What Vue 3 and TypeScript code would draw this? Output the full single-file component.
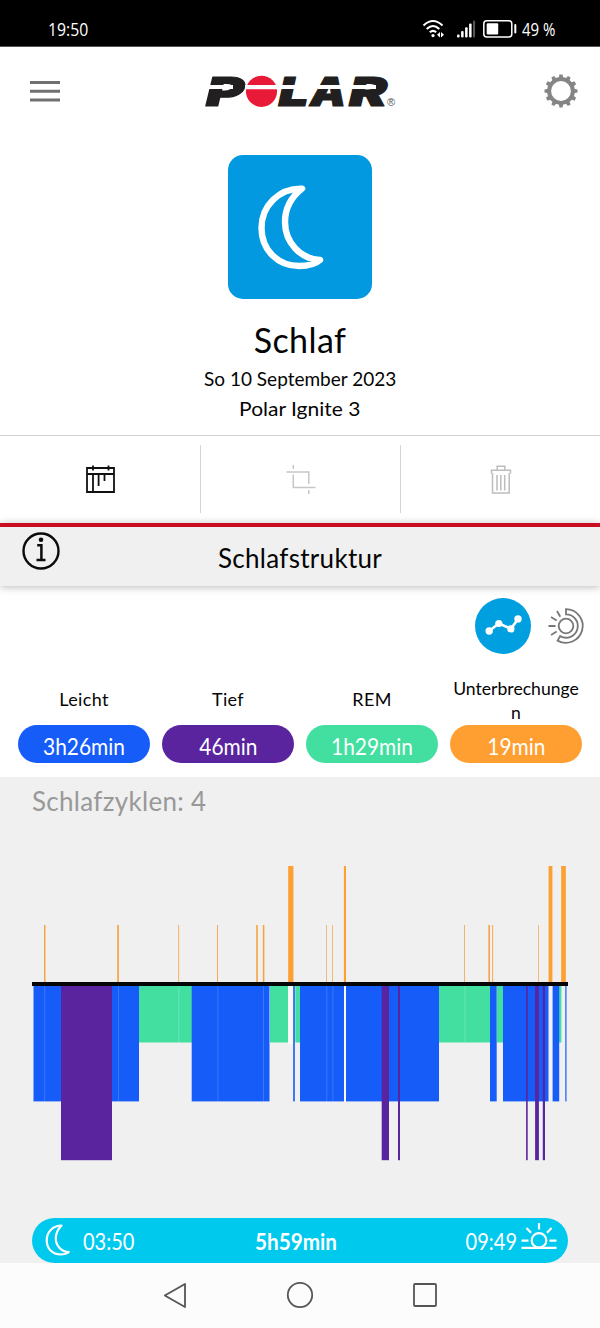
<script setup lang="ts">
interface Phase { label: string; value: string; tone: string }
interface Bar { x: number; w: number; kind: string }

const phases: Phase[] = [
  { label: 'Leicht', value: '3h26min', tone: 'light' },
  { label: 'Tief', value: '46min', tone: 'deep' },
  { label: 'REM', value: '1h29min', tone: 'rem' },
  { label: 'Unterbrechungen', value: '19min', tone: 'wake' },
]

const geometry: Record<string, { y: number; h: number; fill: string }> = {
  rem: { y: 986, h: 56.5, fill: '#43dfa0' },
  light: { y: 986, h: 115.4, fill: '#155cf9' },
  deep: { y: 986, h: 174.2, fill: '#5a249f' },
  long: { y: 866, h: 116, fill: '#fd9f31' },
  short: { y: 925, h: 57, fill: '#f5a344' },
}

const make = (kind: string, spans: [number, number][]): Bar[] =>
  spans.map(([a, b]) => ({ x: a, w: b - a, kind }))

const bars: Bar[] = [
  ...make('rem', [[139, 192], [270, 288], [295.3, 300], [439, 490], [497, 503], [559, 561.4]]),
  ...make('light', [[33.5, 61], [112, 139], [191.7, 269.5], [293.2, 294.8], [300, 344], [346, 439], [490, 496.7], [503, 548.5], [552.6, 559.2], [565.3, 566.5]]),
  ...make('deep', [[61, 112], [381.7, 389], [398, 400], [526.1, 527.7], [535.1, 538.9], [542.8, 545]]),
  ...make('long', [[288.2, 293.4], [343.9, 346], [548.6, 552.4], [561.2, 565.8]]),
  ...make('short', [[44, 45.5], [117.2, 118.9], [178.3, 179.1], [217, 217.9], [256.2, 257.8], [262.8, 264.4], [326, 326.7], [332, 332.7], [464, 464.8], [488.4, 490], [492.2, 493.1], [538.1, 538.8]]),
]
const seams: number[] = [44.2, 118, 217.4, 263, 326.3, 332.4]
const remSeams: number[] = [178.3, 464.4]
const teeth: number[] = Array.from({ length: 12 }, (_, i) => i * 30)
</script>

<template>
  <main class="screen">
    <div class="status">
      <span class="clock">19:50</span>
      <div class="signals">
        <svg class="wifi" width="24" height="20" viewBox="0 0 24 20" fill="none" stroke="#fff" stroke-width="2.1">
          <path d="M1.500 6.500Q11 -2.500 20.500 6.500M4.700 10Q11 4 17.300 10M7.800 13.200Q11 10.400 14.200 13.200" />
          <circle cx="11" cy="16.600" r="1.600" fill="#fff" stroke="none" />
          <path d="M18 13l-3 2.700 3 2.700zM19 13l3 2.700-3 2.700z" fill="#fff" stroke="none" />
        </svg>
        <svg class="cell" width="19" height="18" viewBox="0 0 19 18" fill="#fff">
          <rect x="0" y="14.500" width="2.600" height="3" rx="1" /><rect x="4.100" y="11" width="2.500" height="6.500" rx="1" />
          <rect x="8.100" y="7.200" width="2.500" height="10.300" rx="1" /><rect x="12.100" y="3.500" width="2.500" height="14" rx="1" />
          <rect x="16" y="0.500" width="2.100" height="17" rx="1" fill="#555" />
        </svg>
        <svg class="battery" width="34" height="18" viewBox="0 0 34 18">
          <rect x="0.800" y="0.800" width="28" height="16.200" rx="3" fill="none" stroke="#fff" stroke-width="1.500" />
          <rect x="3.700" y="3.300" width="11.500" height="11.200" rx="1" fill="#fff" /><rect x="31.300" y="4" width="2" height="9.500" rx="1" fill="#fff" />
        </svg>
        <span class="percent">49 %</span>
      </div>
    </div>

    <header class="top">
      <svg width="31" height="21" viewBox="0 0 31 21" fill="#707070"><path d="M0 0h30v3H0zM0 8.800h30v3H0zM0 17.500h30v3H0z" /></svg>
      <svg class="brand" width="192" height="34" viewBox="204 74 192 34">
        <g class="brand-word">
          <text x="206" y="105.500" textLength="38" lengthAdjust="spacingAndGlyphs">P</text>
          <text x="278.500" y="105.500" textLength="30" lengthAdjust="spacingAndGlyphs">L</text>
          <text x="310" y="105.500" textLength="36" lengthAdjust="spacingAndGlyphs">A</text>
          <text x="349" y="105.500" textLength="38" lengthAdjust="spacingAndGlyphs">R</text>
        </g>
        <circle cx="261.500" cy="91.300" r="15.600" fill="#e81a38" />
        <path d="M208 85H233V89H208zM245 85H278V89.300H245zM281 85H303V89H281zM318 85H346V89H318zM350 85H376V89H350z" fill="#fff" />
        <text class="registered" x="387" y="106">®</text>
      </svg>
      <svg width="34" height="34" viewBox="-17 -17 34 34">
        <circle r="11.900" fill="none" stroke="#858585" stroke-width="4" />
        <path v-for="a in teeth" :key="a" :transform="`rotate(${a})`" d="M-2.200 -12.500L-1.600 -16.500H1.600L2.200 -12.500z" fill="#858585" />
      </svg>
    </header>

    <section class="hero">
      <div class="tile">
        <svg width="144" height="144" viewBox="228 155 144 144" fill="none" stroke="#fff" stroke-width="6.400" stroke-linejoin="round">
          <path d="M302 188.600C279 188 261.500 206 261.500 228C261.500 250 278 266 299 266C307.500 266 316 263.700 320 260C301 259 285 243 285 222C285 208 291.500 197 302 188.600Z" />
        </svg>
      </div>
      <h1>Schlaf</h1>
      <p class="date">So 10 September 2023</p>
      <p class="device">Polar Ignite 3</p>
    </section>

    <nav class="tools">
      <div class="tool">
        <svg width="30" height="30" viewBox="85 463 30 30" fill="none" stroke="#111" stroke-width="1.800">
          <path d="M87 467H114V491H87zM87 473H114M93 473V491M98.600 473V485M104.500 473V480M93 464.500V469.500M108.500 464.500V469.500" />
        </svg>
      </div>
      <div class="tool">
        <svg width="30" height="30" viewBox="285.500 463 30 30" fill="none" stroke="#c6c6c6" stroke-width="1.500">
          <path d="M286 471H308.300V483M292.800 464V468M292.800 473.500V486.500H315M308.300 489V493" />
        </svg>
      </div>
      <div class="tool">
        <svg width="22" height="30" viewBox="489.500 463 22 30" fill="none" stroke="#bdbdbd" stroke-width="1.500">
          <path d="M492 472V492H508.700V472M491 472.500V469.300H510V472.500M496.700 469V465.200H504.300V469M496.500 474V489.500M500.300 474V489.500M504.200 474V489.500" />
        </svg>
      </div>
    </nav>

    <section class="section-head">
      <svg class="info" width="38" height="38" viewBox="-19 -19 38 38">
        <circle r="17.500" fill="none" stroke="#0b0b0b" stroke-width="2.400" />
        <circle cx="0" cy="-11.200" r="2.300" fill="#0b0b0b" />
        <path d="M-3.800 -5.800H0.400V9M-4.500 9H4.500" fill="none" stroke="#0b0b0b" stroke-width="2.500" />
      </svg>
      <h2>Schlafstruktur</h2>
    </section>

    <section class="summary">
      <div class="modes">
        <svg width="56" height="56" viewBox="475 598 56 56">
          <circle cx="503" cy="626" r="28" fill="#009fdf" />
          <path d="M489 631L499 623.500L511 628.800L518 619" fill="none" stroke="#fff" stroke-width="2.600" />
          <g fill="#fff"><circle cx="489.200" cy="631" r="3.700" /><circle cx="498.800" cy="623.500" r="3.600" /><circle cx="510.900" cy="628.900" r="3.600" /><circle cx="518" cy="618.900" r="3.700" /></g>
        </svg>
        <svg width="38" height="38" viewBox="547 607 38 38" fill="none" stroke="#777" stroke-width="1.800">
          <circle cx="566" cy="626" r="7.300" />
          <path d="M566 609.200A16.800 16.800 0 1 1 557.600 640.600L560.200 636.100A11.700 11.700 0 1 0 566 614.300Z" />
          <path d="M557 611L560.300 616.800M551 617L556.700 620.400M548.500 626H555.500M551 635L556.700 631.600" />
        </svg>
      </div>
      <div class="phases">
        <div v-for="phase in phases" :key="phase.label" class="phase">
          <div class="phase-label" :class="{ long: phase.label.length > 10 }"><span>{{ phase.label }}</span></div>
          <div class="pill" :class="phase.tone"><span>{{ phase.value }}</span></div>
        </div>
      </div>
    </section>

    <section class="cycles">
      <h3>Schlafzyklen: 4</h3>
      <svg class="chart" width="600" height="310" viewBox="0 860 600 310">
        <rect v-for="(bar, i) in bars" :key="i" :x="bar.x" :width="bar.w" :y="geometry[bar.kind].y" :height="geometry[bar.kind].h" :fill="geometry[bar.kind].fill" />
        <rect v-for="x in seams" :key="x" :x="x" y="986" width="1" height="115" fill="#fff" opacity="0.17" />
        <rect v-for="x in remSeams" :key="x" :x="x" y="986" width="1" height="56" fill="#fff" opacity="0.2" />
        <rect x="288.200" y="986" width="4.800" height="58" fill="#f8f8f8" />
        <rect x="344" y="986" width="2" height="116" fill="#f8f8f8" />
        <rect x="32" y="982" width="536" height="4" fill="#050505" />
      </svg>
      <div class="period">
        <svg class="night" width="26" height="32" viewBox="45 1225 26 32" fill="none" stroke="#fff" stroke-width="2.200" stroke-linejoin="round">
          <path d="M61.500 1225.500C53 1225.500 46.700 1232 46.700 1240.300C46.700 1248.800 52.500 1254.500 60.500 1254.500C64 1254.500 67 1253.600 68.800 1252C61.500 1251.600 55.800 1246 55.800 1238.500C55.800 1233 58 1229 61.500 1225.500Z" />
        </svg>
        <span class="start">03:50</span>
        <strong>5h59min</strong>
        <span class="end">09:49</span>
        <svg class="sunrise" width="36" height="28" viewBox="521.500 1221.500 36 28" fill="none" stroke="#fff" stroke-width="2.200">
          <path d="M522 1247.300H557M522 1240.200H529M550 1240.200H557M539.500 1222.500V1229M527 1227.500L531.500 1232.200M552 1227.500L547.500 1232.200" />
          <circle cx="539.500" cy="1239.900" r="7.300" />
        </svg>
      </div>
    </section>

    <footer class="system-nav">
      <svg width="26" height="28" viewBox="162 1281 26 28"><path d="M164.800 1295.500L185 1284V1307Z" /></svg>
      <svg width="28" height="28" viewBox="-14 -14 28 28"><circle r="12.200" /></svg>
      <svg width="26" height="28" viewBox="-13 -14 26 28"><rect x="-11" y="-11" width="22" height="22" rx="1" /></svg>
    </footer>
  </main>
</template>

<style>
body { margin: 0; background: #fff; }
</style>

<style scoped>
.screen { width: 600px; height: 1328px; overflow: hidden; background: #fff; color: #050505; font-family: Lato, "Open Sans", sans-serif; }
.screen svg { display: block; flex: none; overflow: visible; }
h1, h2, h3, p { margin: 0; font-weight: 400; white-space: nowrap; }
.status { height: 47px; box-sizing: border-box; background: #000; color: #fff; border-bottom: 1px solid #555; padding: 13px 44px 0 48px; display: flex; justify-content: space-between; font: 19px/32px "Open Sans", sans-serif; }
.clock { transform: scaleX(.83); transform-origin: left; }
.signals { display: flex; align-items: center; width: 134px; height: 32px; }
.wifi { margin-right: 11px; }
.cell { margin-right: 7px; }
.battery { margin-right: 5px; }
.percent { white-space: nowrap; transform: scaleX(.79); transform-origin: left; }
.top { height: 88px; box-sizing: border-box; padding: 0 22px 0 30px; display: flex; align-items: center; justify-content: space-between; }
.brand { margin-left: -6px; }
.brand-word { font: italic 900 40px Inter, sans-serif; fill: #221f20; stroke: #221f20; stroke-width: 1.200px; stroke-linejoin: round; }
.registered { font: 11px "Liberation Sans", sans-serif; fill: #555; }
.hero { height: 300px; padding-top: 20px; box-sizing: border-box; display: flex; flex-direction: column; align-items: center; }
.tile { width: 144px; height: 144px; border-radius: 15px; background: #0299e1; flex: none; }
h1 { font-size: 34px; line-height: 42px; margin-top: 20px; letter-spacing: .4px; }
.date, .device { font-size: 20px; line-height: 30px; }
.date { margin-top: 2px; transform: scaleX(.95); }
.device { transform: scaleX(1.05); }
.tools { height: 88px; box-sizing: border-box; border-top: 1px solid #d2d2d2; display: grid; grid-template-columns: repeat(3, 1fr); padding: 9px 0 10px; }
.tool { display: flex; align-items: center; justify-content: center; border-left: 1px solid #d3d5da; }
.tool:first-child { border-left: 0; }
.section-head { position: relative; height: 63px; box-sizing: border-box; border-top: 4px solid #c90d22; background: #f0f0f0; box-shadow: 0 1px 8px rgba(0,0,0,.28); display: grid; grid-template-columns: 78px 1fr 78px; }
.info { margin: 5px 0 0 22px; }
h2 { font-size: 26px; line-height: 63px; text-align: center; letter-spacing: .3px; }
.summary { height: 191px; }
.modes { display: flex; justify-content: flex-end; align-items: center; gap: 16px; padding: 11px 15px 0 0; height: 57px; }
.phases { display: grid; grid-template-columns: repeat(4, 132px); gap: 12px; padding: 19px 18px 0; }
.phase-label { height: 52px; box-sizing: border-box; display: flex; align-items: center; justify-content: center; text-align: center; font-size: 18px; line-height: 24px; letter-spacing: .35px; word-break: break-all; }
.phase-label.long { padding-top: 4px; font-size: 17.600px; letter-spacing: 0; }
.phase-label span { width: 130px; }
.pill { height: 38px; border-radius: 19px; color: #fff; font-size: 24px; line-height: 42px; text-align: center; }
.pill span, .start, .end { display: inline-block; transform: scaleX(.87); }
.light { background: #155cf9; }
.deep { background: #5a249f; }
.rem { background: #43dfa0; }
.wake { background: #ff9f32; }
.cycles { height: 486px; background: #f0f0f0; }
h3 { height: 83px; padding-left: 32px; font-size: 26px; line-height: 48px; color: #999; box-sizing: border-box; letter-spacing: .3px; }
.chart { margin-bottom: 48px; }
.period { margin: 0 32px; height: 45px; border-radius: 23px; background: #00c9ee; color: #fff; display: grid; grid-template-columns: 26px 1fr 110px 1fr 36px; box-sizing: border-box; padding: 0 11px 0 13px; align-items: center; font-size: 23px; }
.start { margin-left: 12px; transform-origin: left; }
.end { text-align: right; margin-right: 4px; transform-origin: right; }
.period strong { text-align: center; font-weight: 700; transform: scaleX(.9); }
.sunrise { margin-top: -10px; }
.system-nav { height: 65px; box-sizing: border-box; padding: 0 1px 1px 0; background: #fcfcfc; display: flex; justify-content: center; align-items: center; gap: 98px; fill: none; stroke: #555; stroke-width: 1.800px; stroke-linejoin: round; }
</style>
